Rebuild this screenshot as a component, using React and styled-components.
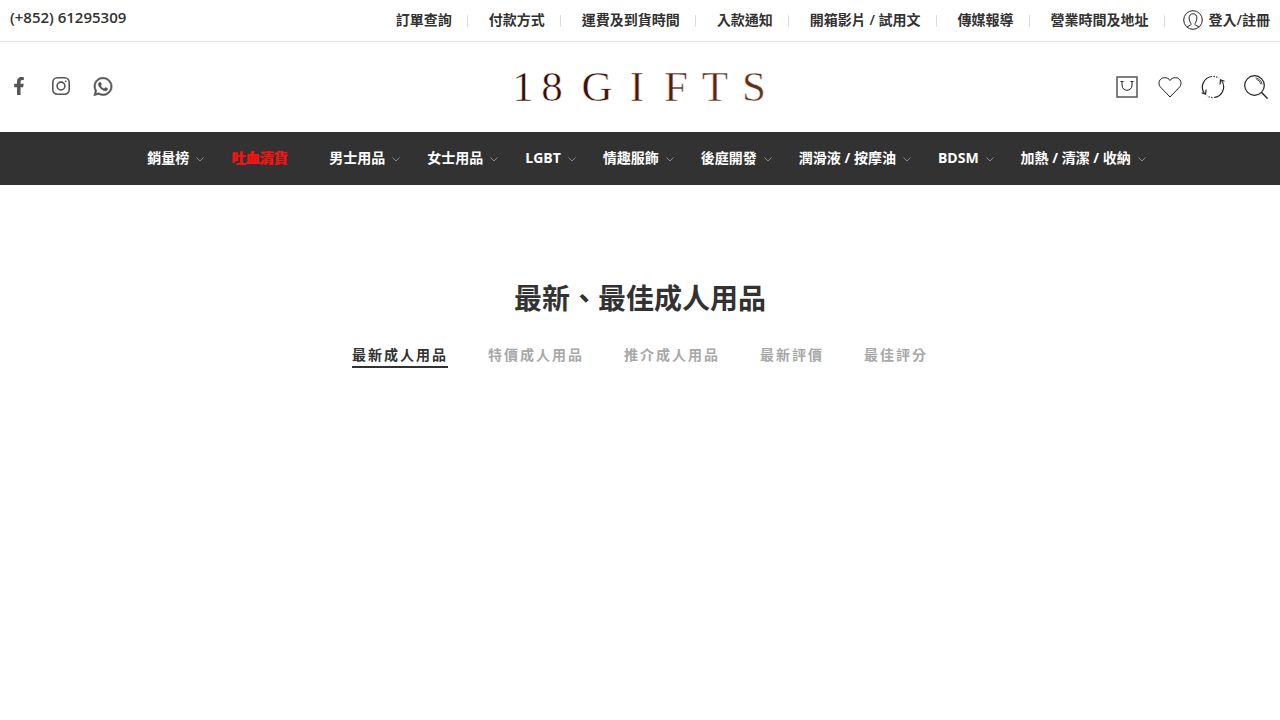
import React from "react";
import styled, { createGlobalStyle } from "styled-components";
import { FaFacebookF, FaWhatsapp } from "react-icons/fa";

const topLinks = [
  "訂單查詢",
  "付款方式",
  "運費及到貨時間",
  "入款通知",
  "開箱影片 / 試用文",
  "傳媒報導",
  "營業時間及地址",
];

const menuItems = [
  { label: "銷量榜", sub: true },
  { label: "吐血清貨", hot: true },
  { label: "男士用品", sub: true },
  { label: "女士用品", sub: true },
  { label: "LGBT", sub: true },
  { label: "情趣服飾", sub: true },
  { label: "後庭開發", sub: true },
  { label: "潤滑液 / 按摩油", sub: true },
  { label: "BDSM", sub: true },
  { label: "加熱 / 清潔 / 收納", sub: true },
];

const tabs = ["最新成人用品", "特價成人用品", "推介成人用品", "最新評價", "最佳評分"];

export default function App() {
  const [active, setActive] = React.useState(0);

  return (
    <>
      <GlobalStyle />
      <TopBar>
        <Phone href="tel:+85261295309">(+852) 61295309</Phone>
        <TopNav>
          {topLinks.map((label) => (
            <TopItem key={label}>
              <TopLink href="#">{label}</TopLink>
            </TopItem>
          ))}
          <TopLink href="#">
            <UserIcon />
            登入/註冊
          </TopLink>
        </TopNav>
      </TopBar>

      <Header>
        <Socials>
          <SocialLink href="#" aria-label="Facebook">
            <FaFacebookF />
          </SocialLink>
          <SocialLink href="#" aria-label="Instagram">
            <InstagramIcon />
          </SocialLink>
          <SocialLink href="#" aria-label="WhatsApp">
            <FaWhatsapp size={21} stroke="currentColor" strokeWidth="12" />
          </SocialLink>
        </Socials>
        <LogoLink href="#" aria-label="18 Gifts">
          <Logo />
        </LogoLink>
        <Tools>
          <ToolButton aria-label="Cart">
            <BagIcon />
          </ToolButton>
          <ToolButton aria-label="Wishlist">
            <HeartIcon />
          </ToolButton>
          <ToolButton aria-label="Compare">
            <CompareIcon />
          </ToolButton>
          <ToolButton aria-label="Search">
            <SearchIcon />
          </ToolButton>
        </Tools>
      </Header>

      <Menu>
        {menuItems.map((item) => (
          <MenuLink key={item.label} href="#" $hot={item.hot}>
            {item.label}
            <Chevron viewBox="0 0 8 5">{item.sub && <path d="M.5.5 4 4 7.5.5" />}</Chevron>
          </MenuLink>
        ))}
      </Menu>

      <Main>
        <Title>最新、最佳成人用品</Title>
        <Tabs role="tablist">
          {tabs.map((label, i) => (
            <Tab
              key={label}
              role="tab"
              aria-selected={i === active}
              $active={i === active}
              onClick={() => setActive(i)}
            >
              {label}
            </Tab>
          ))}
        </Tabs>
      </Main>
    </>
  );
}

const UserIcon = () => (
  <LineIcon viewBox="0 0 20 20" $size={20}>
    <circle cx="10" cy="10" r="9.3" />
    <path d="M4 17.2c.3-1.4 3.6-1.2 4-2.7.3-1.5-1.9-2.7-1.9-6.3 0-2.7 1.5-4.4 3.9-4.4s3.9 1.7 3.9 4.4c0 3.6-2.2 4.8-1.9 6.3.4 1.5 3.7 1.3 4 2.7" />
  </LineIcon>
);

const InstagramIcon = () => (
  <svg viewBox="0 0 18 18" width="18" height="18" fill="none" stroke="currentColor" strokeWidth="1.6">
    <rect x=".8" y=".8" width="16.4" height="16.4" rx="4.6" />
    <circle cx="9" cy="9" r="3.9" />
    <circle cx="13.7" cy="4.3" r=".9" fill="currentColor" stroke="none" />
  </svg>
);

const BagIcon = () => (
  <LineIcon viewBox="0 0 24 24" $size={24}>
    <path d="M2 2h20v20H2z" stroke="#555" strokeWidth="1.5" />
    <path d="M7 6.5V10c0 7 10 7 10 0V6.5M5.5 6.5h3M15.5 6.5h3" />
  </LineIcon>
);

const HeartIcon = () => (
  <LineIcon viewBox="0 0 24 24" $size={24}>
    <path d="M12 22 2.2 11.8C-.4 8.5 1.3 3 6.2 2.7 8.8 2.6 11 3.5 12 5.5c1-2 3.2-2.9 5.8-2.8 4.9.3 6.6 5.8 4 9.1z" />
  </LineIcon>
);

const CompareIcon = () => (
  <LineIcon viewBox="0 0 24 24" $size={24}>
    <path d="M3.5 18.5A10.7 10.7 0 0 1 11 1.5M20.5 5.5A10.7 10.7 0 0 1 13 22.5" strokeWidth="1.2" />
    <path d="M12.5 1.4q3 .2 5.5 1.7M11.5 22.6q-3-.2-5.5-1.7" strokeWidth="1.2" strokeDasharray="1.3 1.4" />
    <path d="m19 9.5.5-4.7 4 1.4M.6 17.8l4 1.4.5-4.7" strokeWidth="1.2" />
  </LineIcon>
);

const SearchIcon = () => (
  <LineIcon viewBox="0 0 24 24" $size={24}>
    <circle cx="10.5" cy="10.5" r="9.8" strokeWidth="1.2" />
    <path d="m17.6 17.6 6 6" strokeWidth="1.4" />
    <path d="M11.5 3c3.5.3 6.2 3 6.5 6.5M12.5 4.5c2.2.6 3.7 2.2 4.2 4.5" strokeWidth=".8" />
  </LineIcon>
);

const Logo = () => (
  <svg viewBox="0 0 280 60" width="280" height="60" role="img">
    <defs>
      <linearGradient id="bronze" x1="0" x2="1" y1="0" y2="0">
        <stop offset="0" stopColor="#2c0804" />
        <stop offset=".5" stopColor="#4c1a0a" />
        <stop offset="1" stopColor="#60341a" />
      </linearGradient>
    </defs>
    <LogoText x="24 53 98 138 177 216 255" y="44" fill="url(#bronze)">
      18GIFTS
    </LogoText>
  </svg>
);

const GlobalStyle = createGlobalStyle`
  * {
    box-sizing: border-box;
  }

  body {
    margin: 0;
    background: #fff;
    color: #323232;
    font-family: "Open Sans", "Noto Sans CJK TC", sans-serif;
    font-size: 14px;
    line-height: 20px;
  }

  a {
    color: inherit;
    text-decoration: none;
  }

  button {
    padding: 0;
    border: 0;
    background: none;
    color: inherit;
    font: inherit;
    cursor: pointer;
  }
`;

const TopBar = styled.div`
  display: flex;
  justify-content: space-between;
  align-items: flex-start;
  padding: 8px 10px 10px;
  border-bottom: 1px solid #e6e6e6;
`;

const Phone = styled.a`
  font-size: 15px;
  line-height: 18px;
  font-weight: 600;
`;

const TopNav = styled.nav`
  display: flex;
  align-items: center;
  padding-top: 1px;
`;

const TopItem = styled.div`
  display: flex;
  align-items: center;

  &::after {
    content: "";
    width: 1px;
    height: 12px;
    margin: 2px 21px 0 15px;
    background: #dcdcdc;
  }

  &:last-of-type::after {
    margin-right: 18px;
  }
`;

const TopLink = styled.a`
  display: flex;
  align-items: center;
  gap: 6px;
  line-height: 22px;
  font-weight: 600;
  white-space: nowrap;
`;

const Header = styled.header`
  display: grid;
  grid-template-columns: 1fr auto 1fr;
  align-items: center;
  height: 90px;
  padding: 0 12px 0 9px;
`;

const Socials = styled.div`
  display: flex;
  align-items: center;
  gap: 22px;
  padding-bottom: 2px;
  color: #555;
`;

const SocialLink = styled.a`
  display: flex;
  align-items: center;
  justify-content: center;
  width: 20px;
  height: 20px;
  font-size: 18px;
`;

const LogoLink = styled.a`
  display: flex;
`;

const LogoText = styled.text`
  font-family: "Liberation Serif", serif;
  font-size: 43px;
  text-anchor: middle;
  stroke: #fff;
  stroke-width: 0.5;
`;

const Tools = styled.div`
  display: flex;
  justify-content: flex-end;
  gap: 19px;
`;

const ToolButton = styled.button`
  display: flex;
`;

const LineIcon = styled.svg`
  width: ${(props) => props.$size}px;
  height: ${(props) => props.$size}px;
  fill: none;
  stroke: #222;
  stroke-width: 1;
`;

const Menu = styled.nav`
  display: flex;
  justify-content: center;
  background: #323232;
`;

const MenuLink = styled.a`
  display: flex;
  align-items: center;
  gap: 7px;
  height: 53px;
  padding: 0 7px 2px 20px;
  color: ${(props) => (props.$hot ? "#f01414" : "#fff")};
  font-weight: 700;
  white-space: nowrap;
  text-shadow: ${(props) => (props.$hot ? "1px 0 currentColor" : "none")};
`;

const Chevron = styled.svg`
  width: 8px;
  height: 5px;
  margin-top: 4px;
  fill: none;
  stroke: #8a8a8a;
  stroke-width: 1;
`;

const Main = styled.main`
  display: flex;
  flex-direction: column;
  align-items: center;
  padding: 92px 10px;
`;

const Title = styled.h2`
  margin: 0;
  font-size: 28px;
  line-height: 42px;
  font-weight: 700;
`;

const Tabs = styled.div`
  display: flex;
  gap: 40px;
  margin-top: 26px;
`;

const Tab = styled.button`
  padding-bottom: 1px;
  border-bottom: 2px solid ${(props) => (props.$active ? "#323232" : "transparent")};
  color: ${(props) => (props.$active ? "#323232" : "#a8a8a8")};
  font-weight: 600;
  letter-spacing: 2px;
`;
